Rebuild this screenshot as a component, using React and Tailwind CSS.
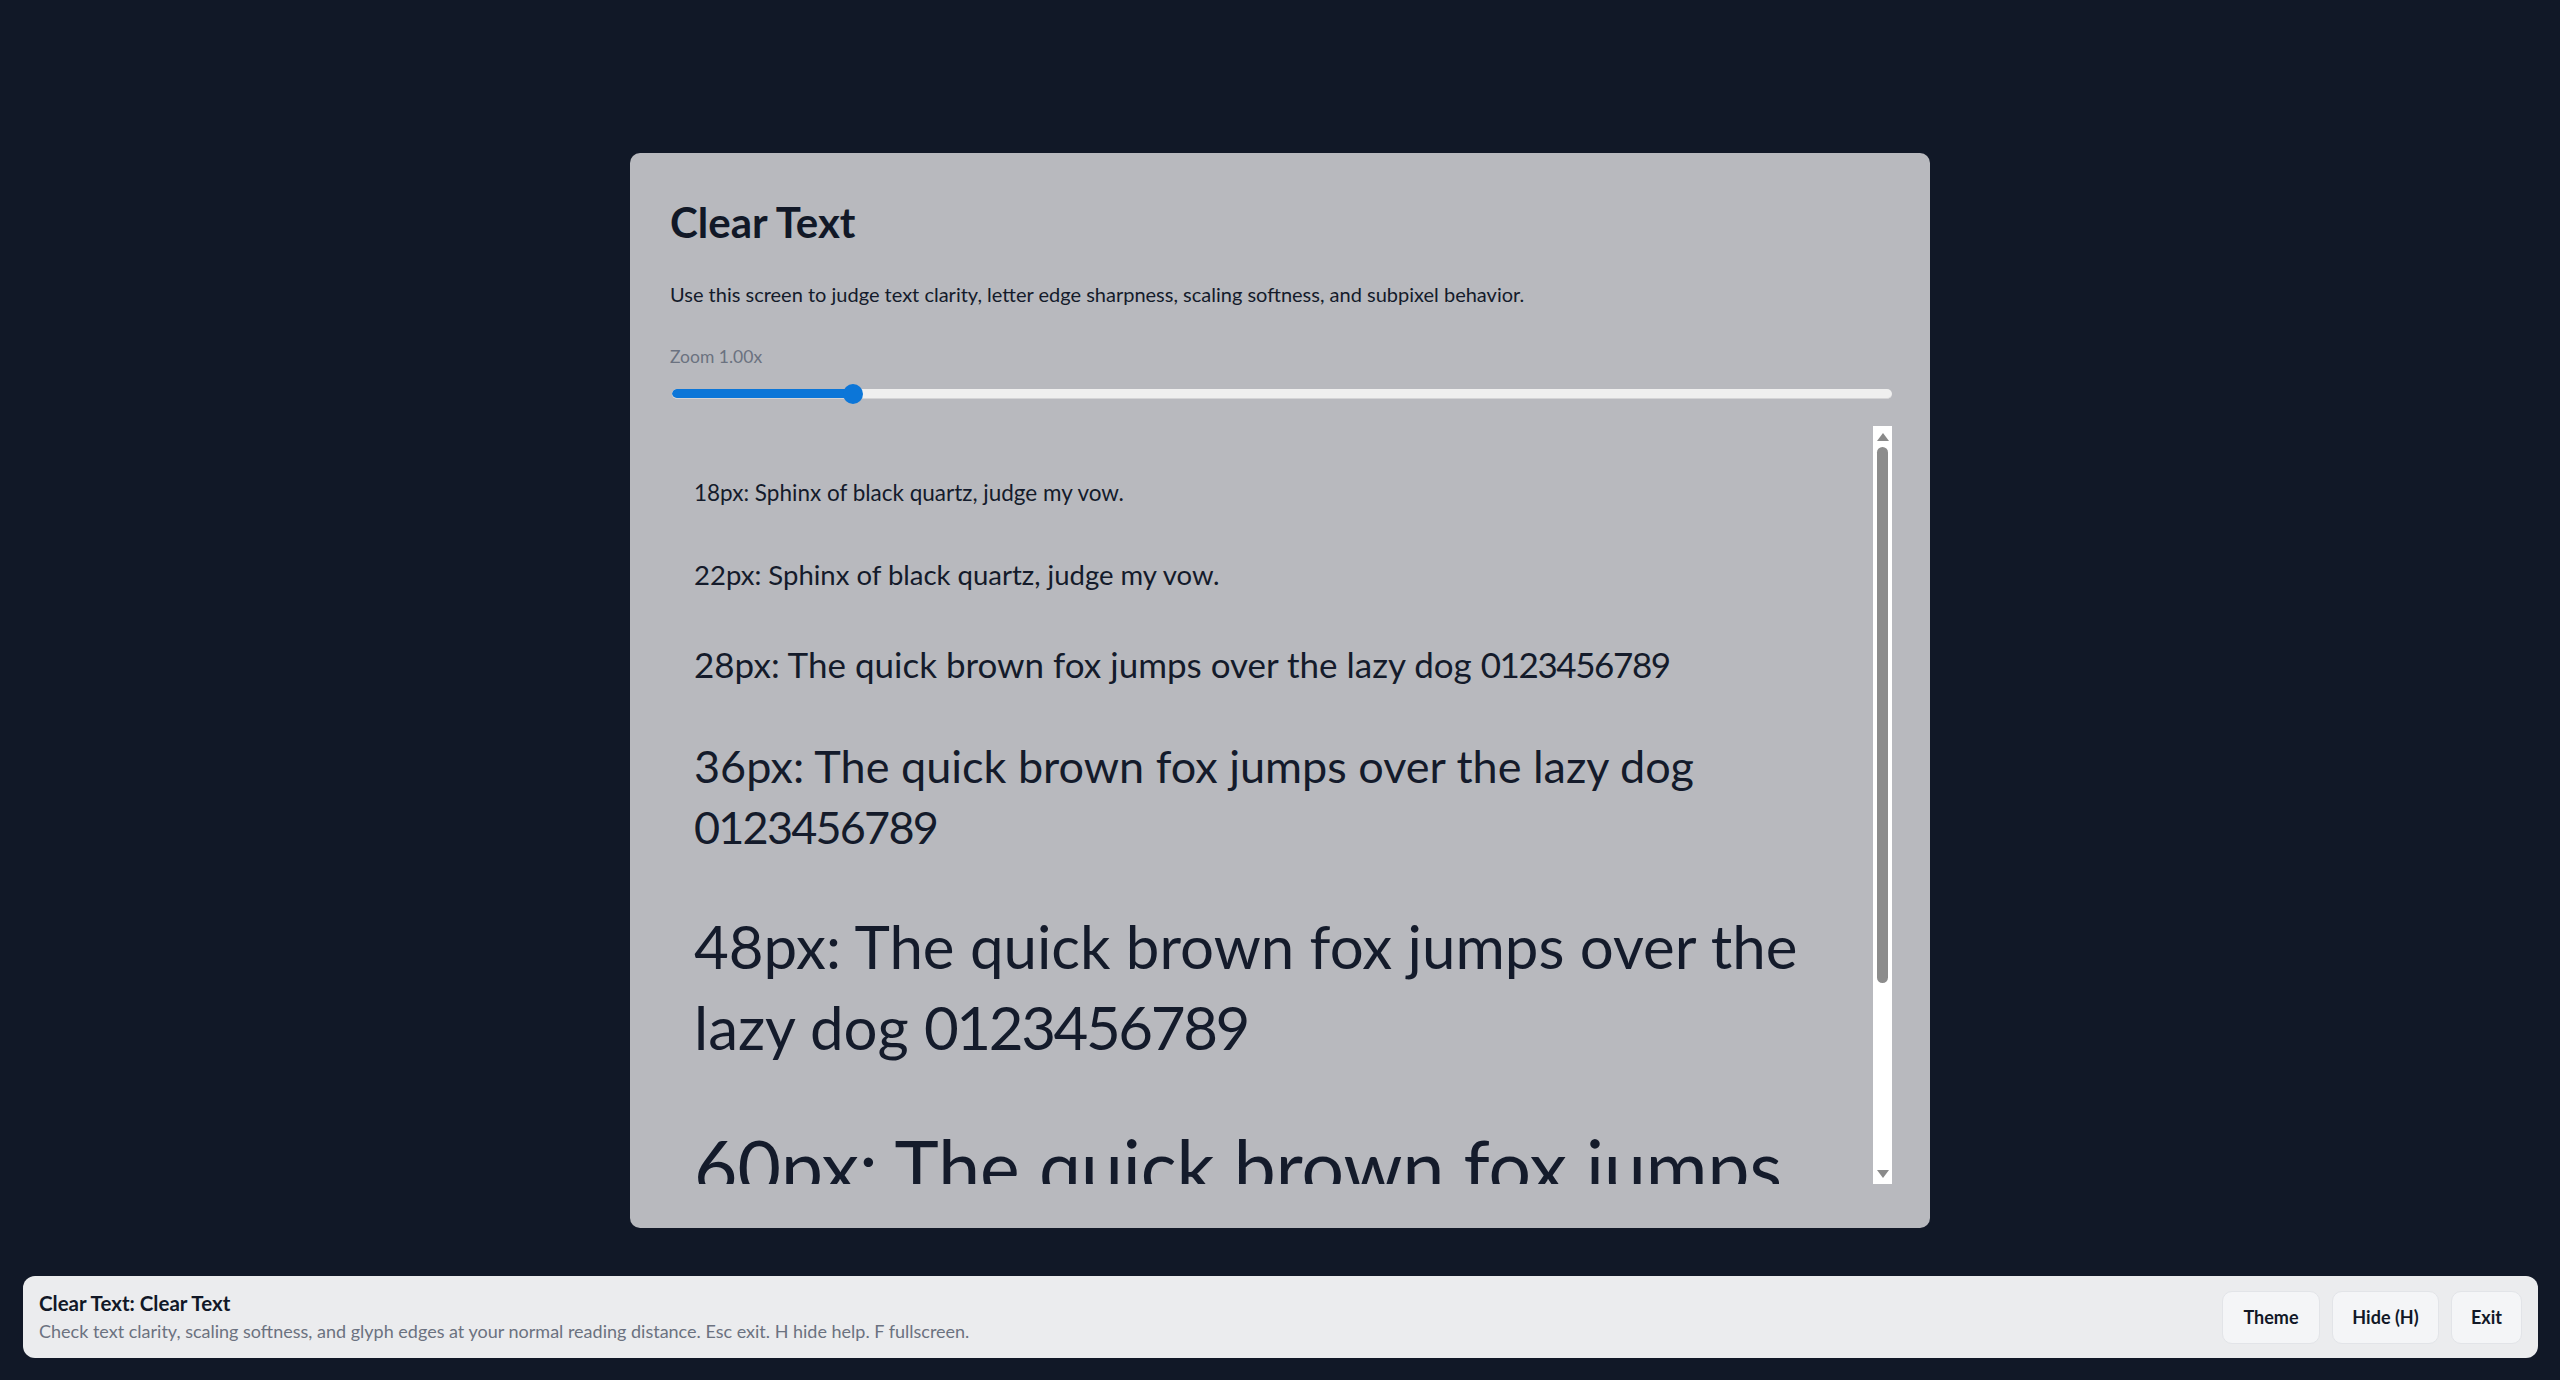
import React from "react";

const FONT = { fontFamily: "Lato, 'Noto Sans', 'Liberation Sans', sans-serif" };

function Digits() {
  return <span className="tracking-[-0.04em]">0123456789</span>;
}

function Sample({ size, children }) {
  return <div className={`whitespace-nowrap leading-[1.35] text-[#141b2b] ${size}`}>{children}</div>;
}

export default function App() {
  return (
    <div className="min-h-screen w-full bg-[#111827] flex items-center justify-center" style={FONT}>
      <div className="w-[1300px] h-[1075px] rounded-[10px] bg-[#b8b9be] pt-[44px] pl-[40px] pr-[38px] pb-[44px] flex flex-col">
        <h1 className="text-[42px] leading-[50px] font-bold text-[#111827]">Clear Text</h1>
        <p className="mt-[32px] text-[20px] leading-[30px] text-[#141b2b]">
          Use this screen to judge text clarity, letter edge sharpness, scaling softness, and subpixel behavior.
        </p>
        <div className="mt-[35px] text-[17.5px] leading-[26px] text-[#6b7280]">Zoom 1.00x</div>
        <div className="mt-[14px] relative h-[20px] flex items-center pl-[2px]">
          <div className="w-full h-[10px] rounded-full bg-[#efefef] border-b border-[#d4d4d6] overflow-hidden">
            <div className="h-full w-[181px] rounded-full bg-[#0c76d8]" />
          </div>
          <div className="absolute left-[173px] top-0 w-[20px] h-[20px] rounded-full bg-[#0c76d8]" />
        </div>
        <div className="mt-[22px] flex-1 min-h-0 flex">
          <div className="flex-1 overflow-hidden pl-[24px] pt-[52px] flex flex-col gap-[48px]">
            <Sample size="text-[22.5px]">18px: Sphinx of black quartz, judge my vow.</Sample>
            <Sample size="text-[27.5px]">22px: Sphinx of black quartz, judge my vow.</Sample>
            <Sample size="text-[35px]">
              28px: The quick brown fox jumps over the lazy dog <Digits />
            </Sample>
            <Sample size="text-[45px]">
              36px: The quick brown fox jumps over the lazy dog
              <br />
              <Digits />
            </Sample>
            <Sample size="text-[60px]">
              48px: The quick brown fox jumps over the
              <br />
              lazy dog <Digits />
            </Sample>
            <Sample size="text-[75px]">
              60px: The quick brown fox jumps
              <br />
              over the lazy dog <Digits />
            </Sample>
          </div>
          <div className="w-[19px] bg-white flex flex-col items-center pt-[7px] pb-[6px]">
            <svg width="12" height="8" viewBox="0 0 12 8"><path d="M6 0 L12 8 L0 8 Z" fill="#8a8a8a" /></svg>
            <div className="mt-[6px] w-[11px] h-[536px] rounded-full bg-[#8c8c8c]" />
            <div className="flex-1" />
            <svg width="12" height="8" viewBox="0 0 12 8"><path d="M0 0 L12 0 L6 8 Z" fill="#8a8a8a" /></svg>
          </div>
        </div>
      </div>

      <div className="fixed left-[23px] right-[22px] bottom-[22px] h-[82px] rounded-[12px] bg-[#ebecee] pl-[16px] pr-[16px] flex items-center justify-between">
        <div className="flex flex-col gap-[3px]">
          <div className="text-[20.5px] leading-[25px] font-bold text-[#111827]">Clear Text: Clear Text</div>
          <div className="text-[18px] leading-[24px] text-[#6b7280]">
            Check text clarity, scaling softness, and glyph edges at your normal reading distance. Esc exit. H hide help. F fullscreen.
          </div>
        </div>
        <div className="flex items-center gap-[12px]">
          <button className="h-[53px] w-[98px] rounded-[10px] bg-[#f4f5f7] border border-[#e2e4e8] text-[18px] font-bold text-[#111827]">Theme</button>
          <button className="h-[53px] w-[107px] rounded-[10px] bg-[#f4f5f7] border border-[#e2e4e8] text-[18px] font-bold text-[#111827]">Hide (H)</button>
          <button className="h-[53px] w-[71px] rounded-[10px] bg-[#f4f5f7] border border-[#e2e4e8] text-[18px] font-bold text-[#111827]">Exit</button>
        </div>
      </div>
    </div>
  );
}
